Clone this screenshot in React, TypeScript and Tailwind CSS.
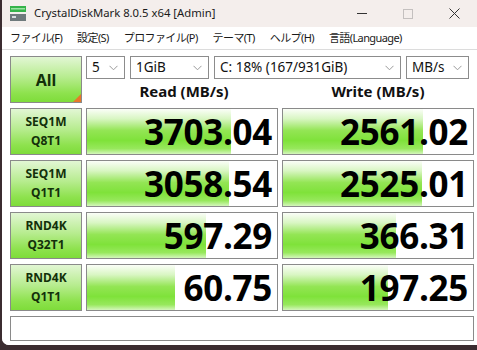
const ui = { fontFamily: '"Noto Sans", "Noto Sans CJK JP", sans-serif' };
const num = { fontFamily: '"Open Sans", "Noto Sans", sans-serif' };

const rows = [
  { l1: "SEQ1M", l2: "Q8T1", read: "3703.04", rp: 0.76, write: "2561.02", wp: 0.735 },
  { l1: "SEQ1M", l2: "Q1T1", read: "3058.54", rp: 0.745, write: "2525.01", wp: 0.73 },
  { l1: "RND4K", l2: "Q32T1", read: "597.29", rp: 0.625, write: "366.31", wp: 0.595 },
  { l1: "RND4K", l2: "Q1T1", read: "60.75", rp: 0.465, write: "197.25", wp: 0.55 },
];

const menus = ["ファイル(F)", "設定(S)", "プロファイル(P)", "テーマ(T)", "ヘルプ(H)", "言語(Language)"];

function Chevron() {
  return (
    <svg width="9" height="6" viewBox="0 0 9 6" className="shrink-0">
      <path d="M0.5 0.8 L4.5 4.8 L8.5 0.8" fill="none" stroke="#9a9a9a" strokeWidth="1" />
    </svg>
  );
}

function Select({ value, w }: { value: string; w: string }) {
  return (
    <div className={`${w} flex h-[23px] items-center justify-between border border-[#8c8c8c] bg-white pl-[5px] pr-[6px] text-[13.5px] leading-none text-[#111]`}>
      <span className="whitespace-nowrap">{value}</span>
      <Chevron />
    </div>
  );
}

function Bar({ value, pct }: { value: string; pct: number }) {
  return (
    <div className="relative h-[47px] overflow-hidden border border-[#8a8a8a] bg-white">
      <div
        className="absolute inset-y-0 left-0 bg-[linear-gradient(to_bottom,#fbfef8_0%,#d8f6c2_22%,#93e554_48%,#7fe23a_70%,#97e85c_88%,#d4f6bc_100%)]"
        style={{ width: `${pct * 100}%` }}
      />
      <div className="relative flex h-full items-center justify-end pr-[5px] text-[35px] font-bold leading-none tracking-[-0.3px] text-black" style={num}>
        {value}
      </div>
    </div>
  );
}

function Label({ l1, l2 }: { l1: string; l2: string }) {
  return (
    <div className="flex h-[47px] flex-col items-center justify-center gap-[3px] border border-[#8a8a8a] bg-[linear-gradient(to_bottom,#e2f6d4_0%,#b7ec8f_45%,#8ee24e_80%,#7edc3a_100%)] text-[12px] font-bold leading-[16px] text-[#13300a]">
      <span>{l1}</span>
      <span>{l2}</span>
    </div>
  );
}

export default function App() {
  return (
    <div className="h-[350px] w-[477px] overflow-hidden bg-[#3b2c30]" style={ui}>
      <div className="ml-[2px] flex h-[345px] flex-col overflow-hidden rounded-bl-[7px] bg-white">
        <div className="flex h-[27px] items-center bg-[#f4eeec]">
          <svg width="16" height="15" viewBox="0 0 16 15" className="ml-[8px]">
            <rect x="0" y="0" width="16" height="6" fill="#36b34a" />
            <rect x="1" y="2" width="14" height="1.5" fill="#9be3a3" />
            <rect x="0" y="8" width="16" height="7" fill="#6f7a7c" />
            <rect x="2" y="10" width="4" height="2" fill="#d6dcdd" />
          </svg>
          <span className="ml-[8px] whitespace-nowrap text-[11.3px] text-[#1a1a1a]">CrystalDiskMark 8.0.5 x64 [Admin]</span>
          <div className="ml-auto flex h-full items-center">
            <div className="flex w-[46px] justify-center">
              <div className="h-px w-[10px] bg-[#333]" />
            </div>
            <div className="flex w-[46px] justify-center">
              <div className="h-[10px] w-[10px] border border-[#c4c0bf]" />
            </div>
            <div className="flex w-[46px] justify-center">
              <svg width="11" height="11" viewBox="0 0 11 11">
                <path d="M0.5 0.5 L10.5 10.5 M10.5 0.5 L0.5 10.5" stroke="#333" strokeWidth="1" />
              </svg>
            </div>
          </div>
        </div>
        <div className="flex h-[23px] items-center gap-[15px] whitespace-nowrap border-b border-[#dcdcdc] bg-white pl-[8px] text-[11px] tracking-[-0.6px] text-[#1a1a1a]">
          {menus.map((m) => (
            <span key={m} className="shrink-0">
              {m}
            </span>
          ))}
        </div>
        <div className="flex flex-1 flex-col gap-[5px] bg-white pl-[8px] pt-[6px]">
          <div className="flex gap-[4px]">
            <div className="relative flex h-[47px] w-[72px] items-center justify-center border border-[#8a8a8a] bg-[linear-gradient(to_bottom,#e2f6d4_0%,#b7ec8f_45%,#8ee24e_80%,#7edc3a_100%)] text-[16px] font-bold text-[#13300a]">
              All
              <div className="absolute bottom-0 right-0 h-0 w-0 border-b-[8px] border-l-[8px] border-b-[#e8782a] border-l-transparent" />
            </div>
            <div className="flex flex-col">
              <div className="flex gap-[5px]">
                <Select value="5" w="w-[39px]" />
                <Select value="1GiB" w="w-[79px]" />
                <Select value="C: 18% (167/931GiB)" w="w-[187px]" />
                <Select value="MB/s" w="w-[63px]" />
              </div>
              <div className="flex h-[24px] items-center text-[15px] font-bold text-[#111]">
                <div className="w-[196px] text-center">Read (MB/s)</div>
                <div className="w-[192px] text-center">Write (MB/s)</div>
              </div>
            </div>
          </div>
          {rows.map((r) => (
            <div key={r.l1 + r.l2} className="grid grid-cols-[72px_192px_192px] gap-x-[4px]">
              <Label l1={r.l1} l2={r.l2} />
              <Bar value={r.read} pct={r.rp} />
              <Bar value={r.write} pct={r.wp} />
            </div>
          ))}
          <div className="h-[25px] w-[464px] border border-[#8a8a8a] bg-white" />
        </div>
      </div>
    </div>
  );
}
